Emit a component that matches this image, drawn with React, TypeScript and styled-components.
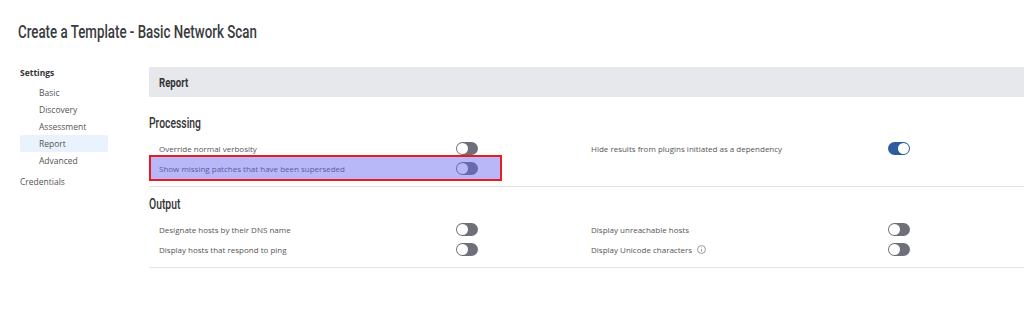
import React from 'react';
import styled, { createGlobalStyle } from 'styled-components';

const GlobalStyle = createGlobalStyle`
    html, body {
        margin: 0;
        padding: 0;
        background: #ffffff;
    }
    body {
        font-family: 'Open Sans', 'Noto Sans', sans-serif;
        color: #555;
    }
`;

// no condensed family is installed, so the headings squeeze Roboto horizontally
const Narrow = styled.span<{ $weight?: number }>`
    display: inline-block;
    font-family: 'Roboto', 'Liberation Sans', sans-serif;
    font-weight: ${({ $weight }) => $weight ?? 500};
    transform: scaleX(0.74);
    transform-origin: left center;
    white-space: nowrap;
`;

const Page = styled.div`
    width: 1024px;
    height: 327px;
    overflow: hidden;
`;

const Title = styled.h1`
    margin: 0;
    padding: 21px 0 0 18px;
    height: 40px;
    box-sizing: border-box;
    font-size: 18px;
    font-weight: 500;
    line-height: 20px;
    color: #3a3b3e;
`;

const Body = styled.div`
    display: flex;
    flex-direction: row;
`;

const Sidebar = styled.nav`
    width: 149px;
    flex-shrink: 0;
    padding: 24px 0 0 20px;
    box-sizing: border-box;
`;

const NavGroup = styled.div<{ $strong?: boolean }>`
    font-size: 8.5px;
    line-height: 17px;
    font-weight: ${({ $strong }) => ($strong ? 700 : 400)};
    color: ${({ $strong }) => ($strong ? '#333' : '#555')};
    margin-bottom: 3px;
`;

const NavItem = styled.div<{ $active?: boolean }>`
    width: 88px;
    height: 17px;
    line-height: 17px;
    padding-left: 19px;
    box-sizing: border-box;
    font-size: 8.5px;
    color: #555;
    border-radius: 2px;
    background: ${({ $active }) => ($active ? '#eaf3fd' : 'transparent')};
`;

const Main = styled.main`
    flex: 1;
    padding-top: 27px;
`;

const Band = styled.div`
    height: 30px;
    background: #e7e8eb;
    display: flex;
    align-items: center;
    padding-left: 10px;
    margin-bottom: 9px;
    font-size: 13px;
    color: #333;
`;

const Section = styled.section`
    padding: 7px 0 8px 0;
    border-bottom: 1px solid #e3e3e3;
`;

const SectionTitle = styled.h2`
    margin: 0 0 5px 0;
    height: 20px;
    line-height: 20px;
    font-size: 14px;
    font-weight: 500;
    color: #333;
`;

const Grid = styled.div`
    display: grid;
    grid-template-columns: 432px 1fr;
    grid-auto-flow: column;
    grid-template-rows: repeat(2, 20px);
`;

const Row = styled.div`
    position: relative;
    width: 353px;
    height: 20px;
    display: flex;
    align-items: center;
    padding-left: 10px;
    box-sizing: border-box;
    font-size: 8px;
    color: #555;
`;

const Label = styled.span`
    width: 297px;
    display: flex;
    align-items: center;
    gap: 5px;
`;

const Track = styled.span<{ $on?: boolean }>`
    position: relative;
    width: 22px;
    height: 13px;
    border-radius: 7px;
    background: ${({ $on }) => ($on ? '#2c5c9b' : '#6e7079')};
    flex-shrink: 0;
`;

const Knob = styled.span<{ $on?: boolean }>`
    position: absolute;
    top: 1px;
    left: ${({ $on }) => ($on ? '10px' : '1px')};
    width: 11px;
    height: 11px;
    border-radius: 50%;
    background: #fff;
`;

const Highlight = styled.div`
    position: absolute;
    left: 0;
    right: 0;
    top: -3px;
    bottom: -3px;
    background: rgba(97, 97, 239, 0.45);
    border: 2px solid #e81a24;
    pointer-events: none;
`;

const Toggle: React.FC<{ on?: boolean }> = ({ on }) => (
    <Track $on={on}>
        <Knob $on={on} />
    </Track>
);

const InfoIcon = () => (
    <svg width="9" height="9" viewBox="0 0 10 10" fill="none" stroke="#777" strokeWidth="0.8">
        <circle cx="5" cy="5" r="4.4" />
        <line x1="5" y1="4.3" x2="5" y2="7.4" />
        <circle cx="5" cy="2.9" r="0.5" fill="#777" stroke="none" />
    </svg>
);

type Option = { label: string; on?: boolean; info?: boolean; marked?: boolean };

const processing: Option[] = [
    { label: 'Override normal verbosity' },
    { label: 'Show missing patches that have been superseded', marked: true },
    { label: 'Hide results from plugins initiated as a dependency', on: true },
];

const output: Option[] = [
    { label: 'Designate hosts by their DNS name' },
    { label: 'Display hosts that respond to ping' },
    { label: 'Display unreachable hosts' },
    { label: 'Display Unicode characters', info: true },
];

const OptionGrid: React.FC<{ options: Option[] }> = ({ options }) => (
    <Grid>
        {options.map((o) => (
            <Row key={o.label}>
                <Label>
                    {o.label}
                    {o.info && <InfoIcon />}
                </Label>
                <Toggle on={o.on} />
                {o.marked && <Highlight />}
            </Row>
        ))}
    </Grid>
);

export default function App() {
    return (
        <Page>
            <GlobalStyle />
            <Title>
                <Narrow>Create a Template - Basic Network Scan</Narrow>
            </Title>
            <Body>
                <Sidebar>
                    <NavGroup $strong>Settings</NavGroup>
                    <NavItem>Basic</NavItem>
                    <NavItem>Discovery</NavItem>
                    <NavItem>Assessment</NavItem>
                    <NavItem $active>Report</NavItem>
                    <NavItem>Advanced</NavItem>
                    <NavGroup style={{ marginTop: 4 }}>Credentials</NavGroup>
                </Sidebar>
                <Main>
                    <Band>
                        <Narrow $weight={700}>Report</Narrow>
                    </Band>
                    <Section>
                        <SectionTitle>
                            <Narrow>Processing</Narrow>
                        </SectionTitle>
                        <OptionGrid options={processing} />
                    </Section>
                    <Section>
                        <SectionTitle>
                            <Narrow>Output</Narrow>
                        </SectionTitle>
                        <OptionGrid options={output} />
                    </Section>
                </Main>
            </Body>
        </Page>
    );
}
